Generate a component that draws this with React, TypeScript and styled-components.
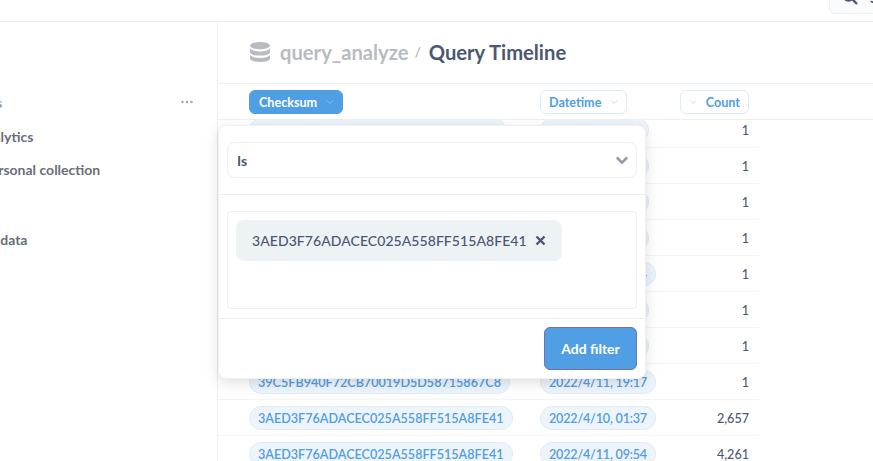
import React from 'react';
import styled, { createGlobalStyle } from 'styled-components';

const GlobalStyle = createGlobalStyle`
  html, body {
    margin: 0;
    padding: 0;
    height: 100%;
    background: #fff;
    overflow: hidden;
  }
  body {
    font-family: Lato, "Open Sans", "Liberation Sans", sans-serif;
    color: #4c5773;
  }
`;

const Page = styled.div`
  width: 873px;
  height: 461px;
  display: flex;
  flex-direction: column;
  overflow: hidden;
`;

const TopBar = styled.header`
  height: 21px;
  flex: none;
  display: flex;
  justify-content: flex-end;
  border-bottom: 1px solid #eeeff1;
  overflow: hidden;
`;

const SearchBox = styled.div`
  width: 60px;
  height: 34px;
  box-sizing: border-box;
  margin-top: -20px;
  margin-right: -16px;
  padding-left: 12px;
  display: flex;
  align-items: center;
  gap: 12px;
  background: #f9fbfc;
  border: 1px solid #eeeff1;
  border-radius: 6px;
  font-size: 14px;
  font-weight: 700;
`;

const Main = styled.div`
  flex: 1;
  min-height: 0;
  display: flex;
`;

const Sidebar = styled.aside`
  width: 217px;
  flex: none;
  padding-top: 70px;
  border-right: 1px solid #eeeff1;
  overflow: hidden;
`;

const SideRow = styled.div<{ $gap: number; $muted?: boolean; $left: number }>`
  display: flex;
  align-items: center;
  justify-content: space-between;
  height: 20px;
  margin-top: ${p => p.$gap}px;
  margin-left: ${p => p.$left}px;
  padding-right: 24px;
  font-size: 14px;
  font-weight: 700;
  white-space: nowrap;
  color: ${p => (p.$muted ? '#9ea3b1' : '#696e7b')};
`;

const Content = styled.main`
  flex: 1;
  min-width: 0;
  display: flex;
  flex-direction: column;
  position: relative;
`;

const TitleBar = styled.div`
  height: 59px;
  flex: none;
  display: flex;
  align-items: center;
  padding: 0 0 2px 32px;
  border-bottom: 1px solid #eeeff1;
  font-size: 20.2px;
  font-weight: 700;
  white-space: nowrap;
`;

const DbName = styled.span`
  margin-left: 10px;
  color: #b8bbc3;
`;

const Slash = styled.span`
  margin: 0 8px 0 6px;
  font-size: 13px;
  color: #b8bbc3;
`;

const TableHead = styled.div`
  height: 35px;
  flex: none;
  display: grid;
  grid-template-columns: 291px 140px 69px;
  align-items: center;
  padding-left: 31px;
  border-bottom: 1px solid #eeeff1;
`;

const HeadButton = styled.div<{ $active?: boolean; $reverse?: boolean }>`
  justify-self: ${p => (p.$reverse ? 'stretch' : 'start')};
  height: 24px;
  box-sizing: border-box;
  display: flex;
  align-items: center;
  justify-content: space-between;
  flex-direction: ${p => (p.$reverse ? 'row-reverse' : 'row')};
  gap: 9px;
  padding: 1px 8px 0 ${p => (p.$active ? 9 : 8)}px;
  border: 1px solid ${p => (p.$active ? '#509ee3' : '#dfebf8')};
  border-radius: 6px;
  background: ${p => (p.$active ? '#509ee3' : '#fff')};
  color: ${p => (p.$active ? '#fff' : '#509ee3')};
  font-size: 12.6px;
  font-weight: 700;
  white-space: nowrap;
`;

const TableBody = styled.div`
  flex: 1;
  min-height: 0;
  overflow: hidden;
`;

const Row = styled.div`
  width: 541px;
  height: 36px;
  box-sizing: border-box;
  display: grid;
  grid-template-columns: 291px 140px 69px;
  align-items: center;
  padding-left: 31px;
  border-bottom: 1px solid #f3f4f6;
  &:first-child {
    margin-top: -8px;
  }
`;

const Pill = styled.span<{ $tight?: boolean }>`
  justify-self: start;
  height: 24px;
  box-sizing: border-box;
  display: inline-flex;
  align-items: center;
  padding: 1px 8px 0;
  background: #eef4fb;
  border: 1px solid #dfebf8;
  border-radius: 12px;
  color: #509ee3;
  font-size: 12.6px;
  font-weight: 600;
  letter-spacing: ${p => (p.$tight ? '-0.2px' : '0')};
  white-space: nowrap;
`;

const CountCell = styled.span`
  justify-self: end;
  padding-top: 1px;
  font-size: 12.6px;
  font-weight: 500;
`;

const Popover = styled.div`
  position: absolute;
  left: 0;
  top: 103px;
  width: 428px;
  box-sizing: border-box;
  background: #fff;
  border: 1px solid #f0f0f1;
  border-radius: 8px;
  box-shadow: 0 4px 14px rgba(0, 0, 0, 0.13);
`;

const SelectSection = styled.div`
  padding: 16px 8px;
  border-bottom: 1px solid #eeeff1;
`;

const SelectField = styled.div`
  height: 36px;
  box-sizing: border-box;
  display: flex;
  align-items: center;
  justify-content: space-between;
  padding: 0 7px 0 9px;
  border: 1px solid #eeeff1;
  border-radius: 8px;
  font-size: 14px;
  font-weight: 700;
`;

const ValueSection = styled.div`
  padding: 16px 8px 9px;
  border-bottom: 1px solid #eeeff1;
`;

const ValueBox = styled.div`
  height: 98px;
  box-sizing: border-box;
  padding: 8px;
  border: 1px solid #eeeff1;
  border-radius: 4px;
`;

const Chip = styled.div`
  width: 326px;
  height: 41px;
  box-sizing: border-box;
  display: flex;
  align-items: center;
  gap: 8px;
  padding-left: 16px;
  background: #edf2f5;
  border-radius: 8px;
  font-size: 14px;
  font-weight: 500;
  letter-spacing: 0.06px;
  white-space: nowrap;
`;

const Footer = styled.div`
  display: flex;
  justify-content: flex-end;
  padding: 8px;
`;

const AddButton = styled.button`
  width: 93px;
  height: 43px;
  background: #509ee3;
  border: 1px solid #7172ad;
  border-radius: 6px;
  color: #fff;
  font-family: inherit;
  font-size: 14px;
  font-weight: 700;
`;

const Chevron = ({ color, size = 8, weight = 1 }: { color: string; size?: number; weight?: number }) => (
  <svg width={size} height={size} viewBox="0 0 8 8" fill="none">
    <path d="M1 2.5 4 5.5 7 2.5" stroke={color} strokeWidth={weight} />
  </svg>
);

const DatabaseIcon = () => (
  <svg width="20" height="20" viewBox="0 0 20 20" fill="#b8bbc3">
    <ellipse cx="10" cy="3.6" rx="10" ry="3.6" />
    <path d="M0 6.2C1.4 8.4 5.4 9.4 10 9.4S18.6 8.4 20 6.2V10.2C20 12.2 15.5 13.6 10 13.6S0 12.2 0 10.2Z" />
    <path d="M0 12.8C1.4 15 5.4 16 10 16S18.6 15 20 12.8V16.4C20 18.4 15.5 20 10 20S0 18.4 0 16.4Z" />
  </svg>
);

const SearchIcon = () => (
  <svg width="16" height="16" viewBox="0 0 16 16" fill="none" stroke="#4c5773" strokeWidth="2.4" style={{ flex: 'none' }}>
    <circle cx="6.5" cy="6.5" r="5" />
    <path d="M10.5 10.5 15 15" />
  </svg>
);

const Dots = () => (
  <svg width="12" height="4" viewBox="0 0 12 4" fill="#9ea3b1">
    <circle cx="1.5" cy="2" r="1.2" />
    <circle cx="6" cy="2" r="1.2" />
    <circle cx="10.5" cy="2" r="1.2" />
  </svg>
);

const CloseIcon = () => (
  <svg width="11" height="11" viewBox="0 0 11 11" fill="none" stroke="#4c5773" strokeWidth="2.4">
    <path d="M1.5 1.5 9.5 9.5M9.5 1.5 1.5 9.5" />
  </svg>
);

const HASH = '3AED3F76ADACEC025A558FF515A8FE41';

const rows = [
  { id: '1F05CA9D4072187001905058715867C8', time: '2022/4/9, 17:05', count: '1' },
  { id: '1F30C8A6D27B9E04C58A1D3E7F62B4A9', time: '2022/4/9, 17:11', count: '1' },
  { id: '2A64E0B7C19D83F5A27C6D0E1B95F3C8', time: '2022/4/9, 17:17', count: '1' },
  { id: '2C91D7F3A60B48E2D75F0A3C8E14B6D2', time: '2022/4/9, 17:21', count: '1' },
  { id: '30E5B2A8F47C1D96B03E7A5C2D68F1B4', time: '2022/4/10, 09:54', count: '1' },
  { id: '33B8D4C6E05F72A19C4E8D0B3F67A2C5', time: '2022/4/9, 18:11', count: '1' },
  { id: '36F7A1E9C28B50D43A6C9F1E7B02D8A3', time: '2022/4/9, 18:17', count: '1' },
  { id: '39C5FB940F72CB70019D5D58715867C8', time: '2022/4/11, 19:17', count: '1' },
  { id: HASH, time: '2022/4/10, 01:37', count: '2,657' },
  { id: HASH, time: '2022/4/11, 09:54', count: '4,261' },
];

export default function App() {
  return (
    <Page>
      <GlobalStyle />
      <TopBar>
        <SearchBox>
          <SearchIcon />
          <span>Search</span>
        </SearchBox>
      </TopBar>
      <Main>
        <Sidebar>
          <SideRow $gap={0} $left={-67} $muted>
            <span>Collections</span>
            <Dots />
          </SideRow>
          <SideRow $gap={14} $left={-49}>Our analytics</SideRow>
          <SideRow $gap={13} $left={-49}>Your personal collection</SideRow>
          <SideRow $gap={50} $left={-50}>Browse data</SideRow>
        </Sidebar>
        <Content>
          <TitleBar>
            <DatabaseIcon />
            <DbName>query_analyze</DbName>
            <Slash>/</Slash>
            <span>Query Timeline</span>
          </TitleBar>
          <TableHead>
            <HeadButton $active>
              Checksum <Chevron color="#8cc0ee" />
            </HeadButton>
            <HeadButton>
              Datetime <Chevron color="#c5dcf3" />
            </HeadButton>
            <HeadButton $reverse>
              Count <Chevron color="#c5dcf3" />
            </HeadButton>
          </TableHead>
          <TableBody>
            {rows.map(r => (
              <Row key={r.id + r.time}>
                <Pill>{r.id}</Pill>
                <Pill $tight>{r.time}</Pill>
                <CountCell>{r.count}</CountCell>
              </Row>
            ))}
          </TableBody>
          <Popover>
            <SelectSection>
              <SelectField>
                Is
                <Chevron color="#949aab" size={14} weight={1.5} />
              </SelectField>
            </SelectSection>
            <ValueSection>
              <ValueBox>
                <Chip>
                  {HASH}
                  <CloseIcon />
                </Chip>
              </ValueBox>
            </ValueSection>
            <Footer>
              <AddButton>Add filter</AddButton>
            </Footer>
          </Popover>
        </Content>
      </Main>
    </Page>
  );
}
